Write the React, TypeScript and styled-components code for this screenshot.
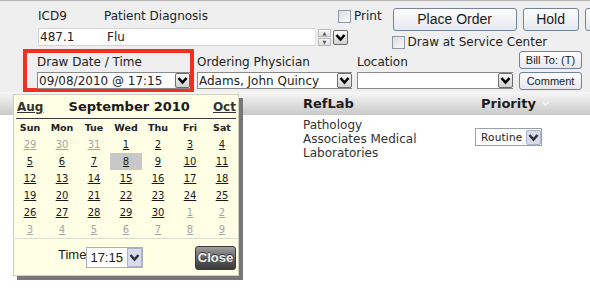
import * as React from 'react';
import styled, { createGlobalStyle } from 'styled-components';

const GlobalStyle = createGlobalStyle`
  html, body {
    margin: 0;
    padding: 0;
    background: #fff;
  }
  body {
    font-family: 'DejaVu Sans', Verdana, sans-serif;
    font-size: 12px;
    color: #222;
  }
`;

const Page = styled.div`
  position: relative;
  width: 590px;
  height: 292px;
  overflow: hidden;
  background: #fff;
`;

const TopPanel = styled.div`
  background: #efefef;
  border-top: 1px solid #b8b8b8;
  height: 91px;
`;

const Row = styled.div<{ $height: number }>`
  display: flex;
  align-items: flex-start;
  height: ${p => p.$height}px;
`;

const DiagBlock = styled.div`
  display: flex;
  flex-direction: column;
  margin-left: 38px;
`;

const LabelRow = styled.div`
  display: flex;
  align-items: center;
  height: 14px;
  margin-top: 8px;
`;

const Label = styled.span<{ $width?: number }>`
  display: inline-block;
  line-height: 14px;
  white-space: nowrap;
  ${p => (p.$width ? `width: ${p.$width}px;` : '')}
`;

const CheckBox = styled.span`
  display: inline-block;
  box-sizing: border-box;
  width: 13px;
  height: 13px;
  border: 1px solid #8c98a8;
  background: linear-gradient(135deg, #dcdcdc, #fbfbfb);
  margin-right: 3px;
`;

const InputRow = styled.div`
  display: flex;
  align-items: center;
  margin-top: 5px;
`;

const TextBox = styled.div`
  box-sizing: border-box;
  display: flex;
  align-items: center;
  width: 278px;
  height: 18px;
  background: #fff;
  border: 1px solid #d4d4d4;
  border-right-color: #e4e4e4;
`;

const Cell = styled.span<{ $width?: number }>`
  padding-left: 1px;
  ${p => (p.$width ? `width: ${p.$width}px;` : '')}
`;

const Spinner = styled.div`
  display: flex;
  flex-direction: column;
  gap: 1px;
  margin-left: 2px;
`;

const SpinPart = styled.span`
  box-sizing: border-box;
  display: flex;
  align-items: center;
  justify-content: center;
  width: 13px;
  height: 8px;
  border: 1px solid #b8b8b8;
  background: linear-gradient(#fafafa, #dedede);
  font-size: 5px;
  color: #555;
`;

const ArrowBtn = styled.span<{ $light?: boolean }>`
  box-sizing: border-box;
  display: flex;
  align-items: center;
  justify-content: center;
  flex: none;
  width: 15px;
  height: 15px;
  border: 1px solid ${p => (p.$light ? '#a8b4cc' : '#6c6c6c')};
  border-radius: 2px;
  background: ${p => (p.$light ? '#d8dcea' : 'linear-gradient(#f8f8f8, #d2d2d2)')};
  margin-left: 2px;
`;

const Chevron = ({ color = '#000' }: { color?: string }) => (
  <svg width="11" height="9" viewBox="0 0 11 9">
    <polyline points="1.5,2 5.5,6.5 9.5,2" fill="none" stroke={color} strokeWidth="2.6" />
  </svg>
);

const ActionBlock = styled.div`
  display: flex;
  flex-direction: column;
  margin-left: 11px;
`;

const ButtonRow = styled.div`
  display: flex;
  gap: 6px;
  margin-top: 7px;
`;

const PushButton = styled.button<{ $width: number; $height: number; $small?: boolean }>`
  box-sizing: border-box;
  flex: none;
  width: ${p => p.$width}px;
  height: ${p => p.$height}px;
  padding: 0 0 ${p => (p.$small ? 0 : 1)}px;
  border: 1px solid #71829a;
  border-radius: 3px;
  background: linear-gradient(#fefefe, #e6e8ef);
  font-family: 'Liberation Sans', Arial, sans-serif;
  font-size: ${p => (p.$small ? 11 : 14)}px;
  color: #1a1a1a;
`;

const CheckRow = styled.div`
  display: flex;
  align-items: center;
  margin-top: 4px;
  margin-left: -1px;
  height: 14px;
`;

const DateBox = styled.div`
  box-sizing: border-box;
  margin-left: 23px;
  width: 171px;
  height: 43px;
  border: 4px solid #f0301f;
  padding: 2px 0 0 10px;
`;

const Field = styled.div<{ $gap: number; $width: number }>`
  margin-left: ${p => p.$gap}px;
  width: ${p => p.$width}px;
  padding-top: 6px;
`;

const FieldLabel = styled.div`
  line-height: 14px;
  height: 14px;
  margin-bottom: 3px;
  white-space: nowrap;
`;

const Select = styled.div<{ $width: number }>`
  box-sizing: border-box;
  display: flex;
  align-items: center;
  width: ${p => p.$width}px;
  height: 17px;
  background: #fff;
  border: 1px solid #8a8a8a;
  border-right: none;
  padding-left: 1px;
`;

const SelectText = styled.span`
  flex: 1;
  white-space: nowrap;
  overflow: hidden;
`;

const SideButtons = styled.div`
  display: flex;
  flex-direction: column;
  gap: 3px;
  margin-left: 6px;
  margin-top: 2px;
`;

const Results = styled.div``;

const HeaderBar = styled.div`
  display: flex;
  align-items: center;
  height: 23px;
  padding-left: 303px;
  background: linear-gradient(#f7f7f7, #c9c9c9);
  font-weight: bold;
  font-size: 13px;
  color: #1c1c1c;
`;

const HeadCell = styled.span<{ $width?: number }>`
  display: flex;
  align-items: center;
  gap: 5px;
  ${p => (p.$width ? `width: ${p.$width}px;` : '')}
`;

const DataRow = styled.div`
  display: flex;
  padding-left: 303px;
  padding-top: 3px;
`;

const LabName = styled.div`
  width: 120px;
  line-height: 14px;
  color: #333;
`;

const PriorityCell = styled.div`
  margin-left: 52px;
  margin-top: 10px;
`;

const SmallSelect = styled.div`
  box-sizing: border-box;
  display: flex;
  align-items: center;
  width: 67px;
  height: 18px;
  border: 1px solid #9aa0aa;
  background: #fff;
  font-size: 10.5px;
  padding-left: 5px;
  letter-spacing: 0.2px;
`;

/* calendar popup */

const Calendar = styled.div`
  position: absolute;
  left: 13px;
  top: 94px;
  width: 224px;
  border: 1px solid #cfcfbf;
  background: #ffffe6;
  box-shadow: 4px 4px 0 #777;
  color: #222;
`;

const CalHeader = styled.div`
  display: flex;
  align-items: center;
  justify-content: space-between;
  height: 23px;
  margin: 0 2px;
  padding: 0 0 0 1px;
  border-bottom: 1px solid #3c3c3c;
`;

const MonthLink = styled.span`
  font-weight: bold;
  font-size: 12px;
  text-decoration: underline;
  color: #333;
`;

const MonthTitle = styled.span`
  font-weight: bold;
  font-size: 13px;
  color: #1a1a1a;
  margin-left: 2px;
`;

const DayGrid = styled.div`
  display: grid;
  grid-template-columns: repeat(7, 32px);
  grid-auto-rows: 17px;
`;

const DayName = styled.div`
  display: flex;
  align-items: center;
  justify-content: center;
  font-weight: bold;
  font-size: 9.5px;
`;

const DateCell = styled.div<{ $muted?: boolean; $selected?: boolean }>`
  display: flex;
  align-items: center;
  justify-content: center;
  font-size: 10px;
  text-decoration: underline;
  color: ${p => (p.$muted ? '#a4a4a4' : '#1a1a1a')};
  background: ${p => (p.$selected ? '#c8c8c8' : 'transparent')};
`;

const CalFooter = styled.div`
  display: flex;
  align-items: center;
  height: 36px;
  border-top: 1px solid #dcdccc;
  padding: 0 2px 0 44px;
  font-family: 'Liberation Sans', Arial, sans-serif;
  font-size: 13px;
`;

const TimeLabel = styled.span`
  margin-top: -5px;
`;

const TimeSelect = styled.div`
  box-sizing: border-box;
  display: flex;
  align-items: center;
  width: 57px;
  height: 21px;
  margin-top: 1px;
  border: 1px solid #a8b0c0;
  background: #fff;
  padding-left: 3px;
`;

const CloseButton = styled.button`
  box-sizing: border-box;
  margin-left: auto;
  margin-top: 1px;
  width: 41px;
  height: 24px;
  padding: 0;
  border: 1px solid #3a3a3a;
  border-radius: 3px;
  background: linear-gradient(#a0a0a0, #5a5a5a 55%, #3a3a3a);
  color: #f0f0f0;
  font-family: 'Liberation Sans', Arial, sans-serif;
  font-weight: bold;
  font-size: 13px;
  text-shadow: 0 -1px 0 #333;
`;

const dayNames = ['Sun', 'Mon', 'Tue', 'Wed', 'Thu', 'Fri', 'Sat'];

const buildDates = () => {
  const cells: { day: number; muted: boolean }[] = [];
  [29, 30, 31].forEach(d => cells.push({ day: d, muted: true }));
  for (let d = 1; d <= 30; d++) cells.push({ day: d, muted: false });
  for (let d = 1; d <= 9; d++) cells.push({ day: d, muted: true });
  return cells;
};

const SelectBox = ({ width, text }: { width: number; text: string }) => (
  <Select $width={width}>
    <SelectText>{text}</SelectText>
    <ArrowBtn>
      <Chevron />
    </ArrowBtn>
  </Select>
);

export default function App() {
  const dates = buildDates();

  return (
    <Page>
      <GlobalStyle />
      <TopPanel>
        <Row $height={48}>
          <DiagBlock>
            <LabelRow>
              <Label $width={66}>ICD9</Label>
              <Label $width={234}>Patient Diagnosis</Label>
              <CheckBox />
              <Label>Print</Label>
            </LabelRow>
            <InputRow>
              <TextBox>
                <Cell $width={66}>487.1</Cell>
                <Cell>Flu</Cell>
              </TextBox>
              <Spinner>
                <SpinPart>▲</SpinPart>
                <SpinPart>▼</SpinPart>
              </Spinner>
              <ArrowBtn>
                <Chevron />
              </ArrowBtn>
            </InputRow>
          </DiagBlock>
          <ActionBlock>
            <ButtonRow>
              <PushButton $width={124} $height={23}>Place Order</PushButton>
              <PushButton $width={56} $height={23}>Hold</PushButton>
              <PushButton $width={60} $height={23} />
            </ButtonRow>
            <CheckRow>
              <CheckBox />
              <Label>Draw at Service Center</Label>
            </CheckRow>
          </ActionBlock>
        </Row>
        <Row $height={43}>
          <DateBox>
            <FieldLabel>Draw Date / Time</FieldLabel>
            <SelectBox width={153} text="09/08/2010 @ 17:15" />
          </DateBox>
          <Field $gap={3} $width={155}>
            <FieldLabel>Ordering Physician</FieldLabel>
            <SelectBox width={155} text="Adams, John Quincy" />
          </Field>
          <Field $gap={5} $width={156}>
            <FieldLabel>Location</FieldLabel>
            <SelectBox width={156} text="" />
          </Field>
          <SideButtons>
            <PushButton $width={63} $height={18} $small>Bill To: (T)</PushButton>
            <PushButton $width={63} $height={18} $small>Comment</PushButton>
          </SideButtons>
        </Row>
      </TopPanel>

      <Results>
        <HeaderBar>
          <HeadCell $width={178}>RefLab</HeadCell>
          <HeadCell>
            Priority
            <svg width="9" height="7" viewBox="0 0 9 7">
              <polyline points="1,1.5 4.5,5 8,1.5" fill="none" stroke="#f4f4f4" strokeWidth="1.6" />
            </svg>
          </HeadCell>
        </HeaderBar>
        <DataRow>
          <LabName>Pathology Associates Medical Laboratories</LabName>
          <PriorityCell>
            <SmallSelect>
              <SelectText>Routine</SelectText>
              <ArrowBtn $light>
                <Chevron color="#333" />
              </ArrowBtn>
            </SmallSelect>
          </PriorityCell>
        </DataRow>
      </Results>

      <Calendar>
        <CalHeader>
          <MonthLink>Aug</MonthLink>
          <MonthTitle>September 2010</MonthTitle>
          <MonthLink>Oct</MonthLink>
        </CalHeader>
        <DayGrid>
          {dayNames.map(n => (
            <DayName key={n}>{n}</DayName>
          ))}
          {dates.map((c, i) => (
            <DateCell key={i} $muted={c.muted} $selected={!c.muted && c.day === 8}>
              {c.day}
            </DateCell>
          ))}
        </DayGrid>
        <CalFooter>
          <TimeLabel>Time</TimeLabel>
          <TimeSelect>
            <SelectText>17:15</SelectText>
            <ArrowBtn $light style={{ height: 19, borderRadius: 0 }}>
              <Chevron color="#334" />
            </ArrowBtn>
          </TimeSelect>
          <CloseButton>Close</CloseButton>
        </CalFooter>
      </Calendar>
    </Page>
  );
}
